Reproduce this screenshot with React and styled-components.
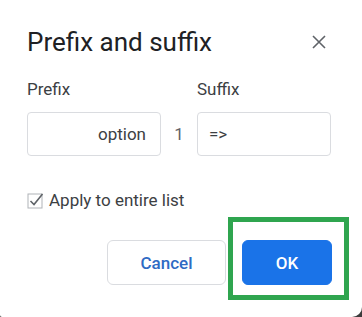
import React from 'react';
import styled, { createGlobalStyle } from 'styled-components';

const GlobalStyle = createGlobalStyle`
  html, body {
    margin: 0;
    padding: 0;
    background: #3c3c3c;
  }
  body {
    font-family: Roboto, "Noto Sans", Arial, sans-serif;
  }
`;

const Dialog = styled.div`
  width: 362px;
  height: 317px;
  box-sizing: border-box;
  background: #fff;
  border-radius: 0 0 10px 2px;
  padding: 26px 30px 0 27px;
  display: flex;
  flex-direction: column;
`;

const TitleRow = styled.div`
  display: flex;
  align-items: center;
  justify-content: space-between;
  height: 32px;
`;

const Title = styled.h1`
  margin: 0;
  font-family: Roboto, "Open Sans", sans-serif;
  font-size: 26px;
  font-weight: 400;
  color: #202124;
`;

const CloseButton = styled.button`
  width: 24px;
  height: 24px;
  border: none;
  background: none;
  padding: 0;
  margin-right: 1px;
  display: flex;
  align-items: center;
  justify-content: center;
  cursor: pointer;
`;

const Fields = styled.div`
  display: grid;
  grid-template-columns: 134px 36px 134px;
  grid-template-rows: auto 44px;
  row-gap: 13px;
  margin-top: 21px;
`;

const Label = styled.div`
  font-size: 17px;
  color: #3c4043;
  line-height: 20px;
`;

const Input = styled.div`
  box-sizing: border-box;
  border: 1px solid #dadce0;
  border-radius: 4px;
  display: flex;
  align-items: center;
  justify-content: ${({ $align }) => ($align === 'right' ? 'flex-end' : 'flex-start')};
  padding: 0 14px 0 11px;
  font-size: 17px;
  color: #3c4043;
`;

const Counter = styled.div`
  display: flex;
  align-items: center;
  justify-content: center;
  font-size: 17px;
  color: #5f6368;
`;

const CheckRow = styled.label`
  display: flex;
  align-items: center;
  gap: 4px;
  margin-top: 34px;
  font-size: 17px;
  color: #3c4043;
`;

const Actions = styled.div`
  display: flex;
  justify-content: flex-end;
  gap: 16px;
  margin-top: 30px;
`;

const Button = styled.button`
  height: 45px;
  box-sizing: border-box;
  border-radius: 6px;
  font-family: Roboto, Arial, sans-serif;
  font-size: 17px;
  font-weight: 500;
  cursor: pointer;
  border: 1px solid ${({ $primary }) => ($primary ? '#1a73e8' : '#dadce0')};
  background: ${({ $primary }) => ($primary ? '#1a73e8' : '#fff')};
  color: ${({ $primary }) => ($primary ? '#fff' : '#2f6bc4')};
  width: ${({ $width }) => $width}px;
`;

const Highlight = styled.div`
  position: relative;
`;

const HighlightBox = styled.div`
  position: absolute;
  left: -14px;
  top: -23px;
  right: -17px;
  bottom: -15px;
  border: 5px solid #2fa54f;
  pointer-events: none;
`;

export default function App() {
  return (
    <>
      <GlobalStyle />
      <Dialog>
        <TitleRow>
          <Title>Prefix and suffix</Title>
          <CloseButton aria-label="Close">
            <svg width="14" height="14" viewBox="0 0 14 14">
              <path d="M1 1L13 13M13 1L1 13" stroke="#5f6368" strokeWidth="1.6" />
            </svg>
          </CloseButton>
        </TitleRow>

        <Fields>
          <Label>Prefix</Label>
          <span />
          <Label>Suffix</Label>
          <Input $align="right">option</Input>
          <Counter>1</Counter>
          <Input>=&gt;</Input>
        </Fields>

        <CheckRow>
          <svg width="18" height="18" viewBox="0 0 18 18">
            <rect x="1" y="3" width="14" height="14" fill="none" stroke="#b0b3b8" strokeWidth="1" />
            <path d="M3.5 10L7 13.5L15.5 3" fill="none" stroke="#5f6368" strokeWidth="1.6" />
          </svg>
          Apply to entire list
        </CheckRow>

        <Actions>
          <Button $width={119}>Cancel</Button>
          <Highlight>
            <Button $primary $width={90}>OK</Button>
            <HighlightBox />
          </Highlight>
        </Actions>
      </Dialog>
    </>
  );
}
